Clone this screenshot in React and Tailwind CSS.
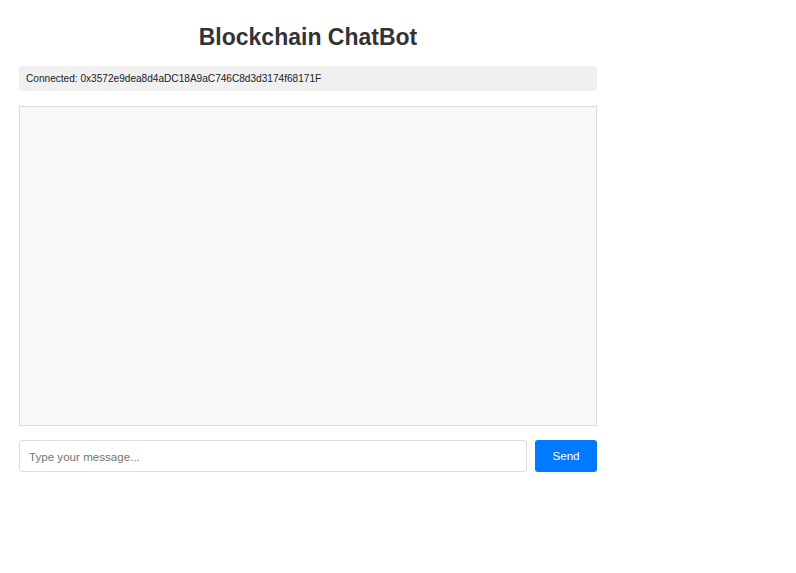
import React, { useState } from 'react';

export default function App() {
  const [message, setMessage] = useState('');
  const account = '0x3572e9dea8d4aDC18A9aC746C8d3d3174f68171F';

  return (
    <div className="w-[796px] min-h-[573px] bg-white font-['Liberation_Sans',Arial,sans-serif]">
      <div className="ml-[19px] w-[578px] pt-[24px]">
        {/* Title */}
        <h1 className="text-center text-[23px] leading-[27px] font-bold text-[#333]">Blockchain ChatBot</h1>

        {/* Wallet status */}
        <div className="mt-[15px] h-[25px] flex items-center px-[7px] rounded-[3px] bg-[#f0f0f0] text-[10.1px] text-[#222]">
          Connected: {account}
        </div>

        {/* Messages */}
        <div className="mt-[15px] h-[320px] border border-[#dddddd] bg-[#f9f9f9]"></div>

        {/* Input row */}
        <div className="mt-[14px] flex gap-[8px]">
          <input
            type="text"
            value={message}
            onChange={(e) => setMessage(e.target.value)}
            placeholder="Type your message..."
            className="flex-1 h-[32px] px-[9px] border border-[#dddddd] rounded-[3px] text-[11.6px] text-[#333] placeholder:text-[#757575] outline-none"
          />
          <button
            type="button"
            className="w-[62px] h-[32px] rounded-[3px] bg-[#007bff] text-white text-[11.6px]"
          >
            Send
          </button>
        </div>
      </div>
    </div>
  );
}
